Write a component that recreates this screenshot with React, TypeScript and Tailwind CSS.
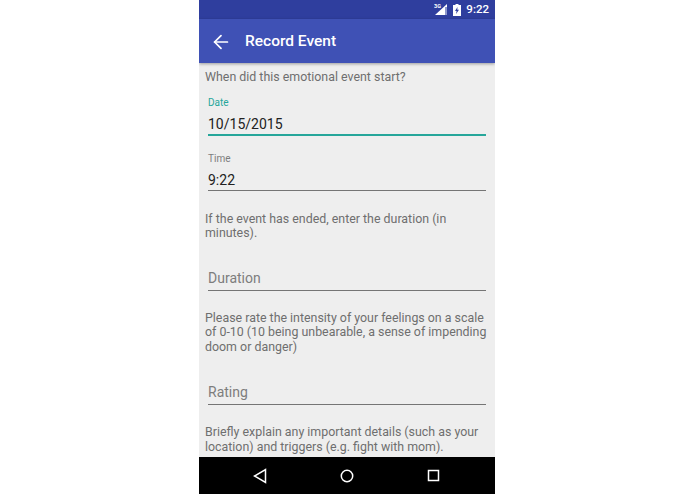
import type { ReactNode } from "react";
import { ArrowLeft } from "lucide-react";

function Field({ label, value, active }: { label?: string; value: string; active?: boolean }) {
    return (
        <div className="mx-[9px]">
            {label && (
                <div className={`text-[10px] leading-[12px] ${active ? "text-[#26a69a]" : "text-[#7d7d7d]"}`}>{label}</div>
            )}
            <div className={`text-[14px] leading-[18px] ${label ? "mt-[6px] text-[#212121]" : "text-[#7d7d7d]"}`}>{value}</div>
            {active && <div className="mt-px h-[2px] bg-[#26a69a]" />}
            {!active && <div className={`h-px bg-[#757575] ${label ? "mt-px" : "mt-[3px]"}`} />}
        </div>
    );
}

function Question({ children }: { children: ReactNode }) {
    return <p className="mx-[6px] whitespace-nowrap text-[12.4px] leading-[14.5px] text-[#6f6f6f]">{children}</p>;
}

export default function App() {
    return (
        <div className="h-[494px] w-[695px] bg-white pl-[199px] font-['Roboto',sans-serif]">
            <div className="flex h-full w-[296px] flex-col overflow-hidden">
                {/* Status bar */}
                <div className="flex h-[19px] items-center justify-end bg-[#2f3e9e] pr-[6px] text-white">
                    <svg width="14" height="13" viewBox="0 0 14 13" className="mr-[5px]">
                        <path d="M13 1v11H1z" fill="#fff" />
                        <path d="M11 4h2v8h-2z" fill="#8f98cc" />
                        <text x="0" y="5" fontSize="5.5" fontWeight="700" fill="#fff" fontFamily="Roboto, sans-serif">3G</text>
                    </svg>
                    <svg width="8" height="12" viewBox="0 0 8 12" className="mr-[5px]">
                        <path d="M2.5 0h3v1H8v11H0V1h2.5z" fill="#fff" />
                        <path d="M4.5 3 2 7h1.6L3 10l3-4.2H4.3z" fill="#2f3e9e" />
                    </svg>
                    <span className="text-[11.5px] font-medium leading-none">9:22</span>
                </div>

                {/* App bar */}
                <div className="z-10 flex h-[44px] items-center bg-[#3f51b5] pl-[11px] pt-[2px] text-white shadow-[0_1px_3px_rgba(0,0,0,0.35)]">
                    <ArrowLeft size={22} strokeWidth={1.9} />
                    <span className="ml-[13px] text-[15.5px] font-medium">Record Event</span>
                </div>

                {/* Form */}
                <div className="flex-1 overflow-hidden bg-[#eeeeee] pt-[7px]">
                    <Question>When did this emotional event start?</Question>
                    <div className="mt-[12px]">
                        <Field label="Date" value="10/15/2015" active />
                    </div>
                    <div className="mt-[17px]">
                        <Field label="Time" value="9:22" />
                    </div>
                    <div className="mt-[21px]">
                        <Question>
                            If the event has ended, enter the duration (in
                            <br />
                            minutes).
                        </Question>
                    </div>
                    <div className="mt-[28px]">
                        <Field value="Duration" />
                    </div>
                    <div className="mt-[20px]">
                        <Question>
                            Please rate the intensity of your feelings on a scale
                            <br />
                            of 0-10 (10 being unbearable, a sense of impending
                            <br />
                            doom or danger)
                        </Question>
                    </div>
                    <div className="mt-[29px]">
                        <Field value="Rating" />
                    </div>
                    <div className="mt-[20px]">
                        <Question>
                            Briefly explain any important details (such as your
                            <br />
                            location) and triggers (e.g. fight with mom).
                        </Question>
                    </div>
                </div>

                {/* Navigation bar */}
                <div className="flex h-[37px] items-center justify-around bg-black pl-[17px] pr-[19px]">
                    <svg width="14" height="16" viewBox="0 0 14 16" fill="none" stroke="#fff" strokeWidth="1.5">
                        <path d="M12.5 1.5v13L1.5 8z" />
                    </svg>
                    <svg width="14" height="14" viewBox="0 0 14 14" fill="none" stroke="#fff" strokeWidth="1.5">
                        <circle cx="7" cy="7" r="5.7" />
                    </svg>
                    <svg width="13" height="13" viewBox="0 0 13 13" fill="none" stroke="#fff" strokeWidth="1.5">
                        <path d="M1.5 1.5h10v10h-10z" />
                    </svg>
                </div>
            </div>
        </div>
    );
}
